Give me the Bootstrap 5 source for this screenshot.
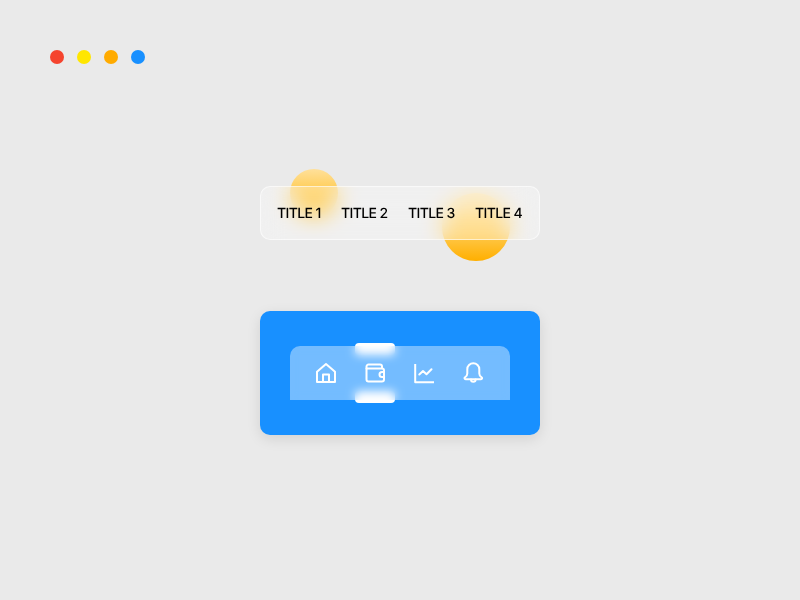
<!DOCTYPE html>
<html lang="en">
<head>
<meta charset="utf-8">
<title>Glass UI</title>
<link href="https://cdn.jsdelivr.net/npm/bootstrap@5.3.0/dist/css/bootstrap.min.css" rel="stylesheet">
<style>
html,body{height:100%}
body{background:#eaeaea;font-family:Inter,"Liberation Sans",sans-serif;overflow:hidden}
.shell{width:800px;height:600px;padding:50px 50px 0}
.dots{gap:12.9px;height:14px}
.dot-item{width:14px;height:14px;border-radius:50%}
.c-red{background:#f5442e}
.c-yellow{background:#ffe600}
.c-orange{background:#ffab00}
.c-blue{background:#1890ff}
.stage{width:280px;margin-left:210px}
.glass-wrap{position:relative;margin-top:122px;height:54px}
.orb{position:absolute;border-radius:50%}
.orb-a{left:30px;top:-17px;width:48px;height:48px;background:linear-gradient(180deg,#ffe09a 0%,#ffb400 100%)}
.orb-b{left:182px;top:7px;width:68px;height:68px;background:linear-gradient(180deg,#ffe6ad 0%,#ffd062 50%,#ffaf00 100%)}
.glass-bar{position:relative;height:54px;border:1px solid rgba(255,255,255,.6);border-radius:10px;background:rgba(255,255,255,.3);backdrop-filter:blur(11px);padding:0 0 0 16px;color:#000;font-size:14px;font-weight:500;letter-spacing:-.6px;text-rendering:geometricPrecision}
.tab-a{width:64px}
.tab-b{width:67px}
.tab-c{width:67px}
.blue-card{position:relative;margin-top:71px;height:124px;border-radius:10px;background:#1890ff;box-shadow:0 4px 14px rgba(0,0,0,.1);padding:35px 30px}
.pill{position:absolute;left:95px;width:40px;height:12px;background:#fff;border-radius:4px}
.pill-top{top:32px}
.pill-bot{top:80px}
.dock{position:relative;height:54px;border-radius:10px 10px 0 0;background:rgba(255,255,255,.4);backdrop-filter:blur(5px);gap:25px;padding-left:24px}
.dock svg{display:block;width:24px;height:24px;fill:none;stroke:#fff;stroke-width:2;stroke-linejoin:round;stroke-linecap:round}
</style>
</head>
<body>
<div class="shell">
  <div class="dots d-flex">
    <span class="dot-item c-red"></span>
    <span class="dot-item c-yellow"></span>
    <span class="dot-item c-orange"></span>
    <span class="dot-item c-blue"></span>
  </div>
  <div class="stage">
    <div class="glass-wrap">
      <span class="orb orb-a"></span>
      <span class="orb orb-b"></span>
      <nav class="glass-bar d-flex align-items-center">
        <span class="tab-a">TITLE 1</span>
        <span class="tab-b">TITLE 2</span>
        <span class="tab-c">TITLE 3</span>
        <span>TITLE 4</span>
      </nav>
    </div>
    <div class="blue-card">
      <span class="pill pill-top"></span>
      <span class="pill pill-bot"></span>
      <div class="dock d-flex align-items-center">
        <svg viewBox="0 0 24 24"><path d="M3 10.800 12 3l9 7.800V21H3Z"/><path d="M9 21v-7.500h6V21"/></svg>
        <svg viewBox="0 0 24 24"><path d="M3.500 7.500V5.500a2 2 0 0 1 2-2H17a2 2 0 0 1 2 2V7"/><path d="M3.500 7.500V18.500a2 2 0 0 0 2 2H19a2 2 0 0 0 2-2V16M3.500 7.500H19a2 2 0 0 1 2 2V11"/><path d="M21 11H19a2.500 2.500 0 0 0 0 5H21Z"/></svg>
        <svg viewBox="0 0 24 24"><path d="M3.200 3V21.200H22" stroke-linecap="butt"/><path d="M7.300 13.500 11 10l3.500 3.200 5-5"/></svg>
        <svg viewBox="0 0 24 24"><path d="M12.300 2.300a6 6 0 0 0-6 6V12.500c0 1.800-.9 3-2.300 3.800-.9.600-.5 1.900.6 1.900h15.400c1.100 0 1.500-1.300.6-1.900-1.400-.8-2.300-2-2.300-3.800V8.300a6 6 0 0 0-6-6Z"/><path d="M10 18.400a2.300 2.300 0 0 0 4.600 0"/></svg>
      </div>
    </div>
  </div>
</div>
<script src="https://cdn.jsdelivr.net/npm/bootstrap@5.3.0/dist/js/bootstrap.bundle.min.js"></script>
</body>
</html>
